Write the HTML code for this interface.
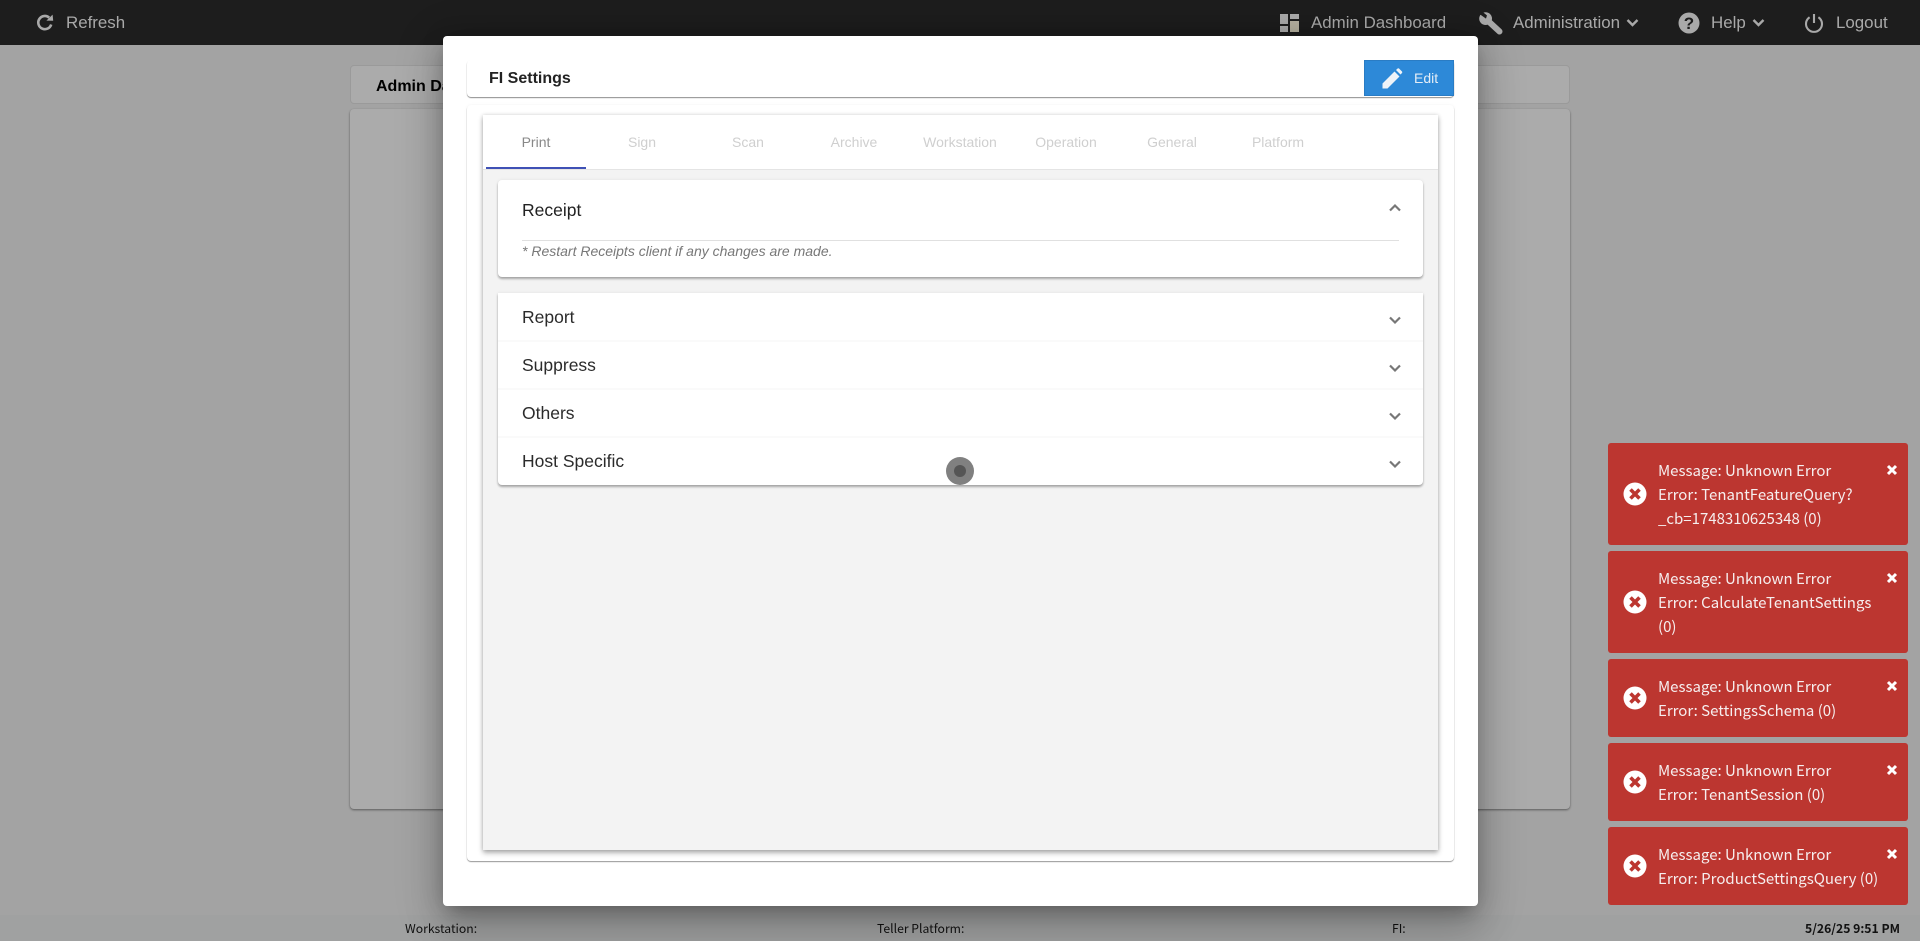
<!DOCTYPE html>
<html><head><meta charset="utf-8"><title>FI Settings</title>
<style>
html,body{margin:0;padding:0;width:1920px;height:941px;overflow:hidden;background:#a3a3a3;font-family:"Liberation Sans",sans-serif}
*{box-sizing:border-box}
.a{position:absolute;white-space:nowrap}
#top{position:absolute;left:0;top:0;width:1920px;height:45px;background:#1d1d1d}
#top .t{position:absolute;top:11px;line-height:24px;font-size:16.9px;color:#a9a9a9;white-space:nowrap}
svg{position:absolute;display:block}
.card{position:absolute;background:#ababab;border-radius:4px}
#foot{position:absolute;left:0;top:915px;width:1920px;height:26px;background:#a0a1a1}
#foot span{position:absolute;top:4px;line-height:18px;font-size:12.2px;color:#111;white-space:nowrap;font-family:"Noto Sans CJK JP","Liberation Sans",sans-serif}
#modal{position:absolute;left:443px;top:36px;width:1035px;height:870px;background:#fff;border-radius:4px;box-shadow:0 11px 15px -7px rgba(0,0,0,.2),0 24px 38px 3px rgba(0,0,0,.14),0 9px 46px 8px rgba(0,0,0,.12),0 0 24px rgba(0,0,0,.12)}
.tab{position:absolute;top:115px;width:100px;height:54px;line-height:55px;text-align:center;font-size:14px;color:#cfcfcf}
.row{position:absolute;left:522px;font-size:17.5px;line-height:24px;color:#2b2b2b}
.toast{position:absolute;left:1608px;width:300px;background:#bc3630;border-radius:3px;color:#f6eeee;font-family:"Noto Sans CJK JP","Liberation Sans",sans-serif;font-size:15px;line-height:24px;padding:16px 0 0 50px;white-space:nowrap}
</style></head><body>

<div class="card" style="left:350px;top:65px;width:1220px;height:39px;border:1px solid #9a9a9a"></div>
<div class="a" style="left:376px;top:77px;font-size:16px;font-weight:bold;line-height:20px;color:#000">Admin Dashboard</div>
<div class="card" style="left:350px;top:109px;width:1220px;height:700px;box-shadow:0 1px 2px rgba(0,0,0,.45)"></div>

<div id="foot">
<span style="left:405px">Workstation:</span>
<span style="left:877px">Teller Platform:</span>
<span style="left:1392px">FI:</span>
<span style="left:1805px;font-weight:bold">5/26/25 9:51 PM</span>
</div>

<div id="top">
<svg style="left:36px;top:14px" width="18" height="18" viewBox="0 0 18 18"><path d="M15.2 10.5A6.6 6.6 0 1 1 13.2 3.6" fill="none" stroke="#a9a9a9" stroke-width="2.6"/><path d="M10.4 6.6L17.2 6.8L16.6 0.6Z" fill="#a9a9a9"/></svg>
<span class="t" style="left:66px">Refresh</span>

<svg style="left:1280px;top:14px" width="19" height="18" viewBox="0 0 19 18" fill="#a9a9a9"><rect x="0" y="0" width="8" height="10"/><rect x="10" y="0" width="9" height="5"/><rect x="0" y="12" width="8" height="6"/><rect x="10" y="7" width="9" height="11" fill="#b5b09f"/></svg>
<span class="t" style="left:1311px">Admin Dashboard</span>

<svg style="left:1479px;top:11px" width="24" height="24" viewBox="0 0 24 24"><circle cx="6.6" cy="7.6" r="6.4" fill="#a9a9a9"/><path d="M7.5 8.5L20.5 20.5" stroke="#a9a9a9" stroke-width="6" stroke-linecap="round"/><path d="M7 7.6L1.4 1.6L4.8 0L8.6 4.6Z" fill="#1d1d1d" transform="rotate(-12 7 7.6)"/></svg>
<span class="t" style="left:1513px">Administration</span>
<svg style="left:1626px;top:18px" width="13" height="10" viewBox="0 0 13 10"><path d="M1.5 2L6.5 7L11.5 2" fill="none" stroke="#a9a9a9" stroke-width="2.4"/></svg>

<svg style="left:1678px;top:12px" width="22" height="22" viewBox="0 0 22 22"><circle cx="11" cy="11" r="10.5" fill="#a9a9a9"/><text x="11" y="17" text-anchor="middle" font-family="Liberation Sans" font-weight="bold" font-size="17" fill="#1d1d1d">?</text></svg>
<span class="t" style="left:1711px">Help</span>
<svg style="left:1752px;top:18px" width="13" height="10" viewBox="0 0 13 10"><path d="M1.5 2L6.5 7L11.5 2" fill="none" stroke="#a9a9a9" stroke-width="2.4"/></svg>

<svg style="left:1804px;top:13px" width="20" height="20" viewBox="0 0 20 20"><path d="M5.6 4.2A8 8 0 1 0 14.4 4.2" fill="none" stroke="#a9a9a9" stroke-width="2.1"/><path d="M10 1V10" stroke="#a9a9a9" stroke-width="2.1"/></svg>
<span class="t" style="left:1836px">Logout</span>
</div>

<div id="modal"></div>
<div class="a" style="left:467px;top:60px;width:987px;height:37px;background:#fff;border-radius:4px;box-shadow:0 1px 1px rgba(0,0,0,.45)"></div>
<div class="a" style="left:489px;top:69px;font-size:16px;font-weight:bold;line-height:20px;color:#222">FI Settings</div>
<div class="a" style="left:1364px;top:60px;width:90px;height:36px;background:#2d89d8;border:1px solid #2a7cc4"></div>
<svg style="left:1382px;top:68px" width="21" height="21" viewBox="0 0 21 21"><path d="M0.5 20.5V15.5L12.5 3.5L17.5 8.5L5.5 20.5Z" fill="#eef3f8"/><path d="M14 2L15.6 0.5Q16.3 0 17 0.5L20 3.5Q20.5 4.2 20 5L18.5 6.5Z" fill="#eef3f8"/></svg>
<div class="a" style="left:1414px;top:68px;font-size:14px;line-height:20px;color:#e4edf6">Edit</div>

<div class="a" style="left:467px;top:105px;width:987px;height:756px;background:#fff;border-radius:4px;box-shadow:0 1px 1px rgba(0,0,0,.4),0 0 3px rgba(0,0,0,.05)"></div>
<div class="a" style="left:483px;top:115px;width:955px;height:735px;background:#f3f3f3;box-shadow:0 3px 5px rgba(0,0,0,.3),0 0 4px rgba(0,0,0,.15)"></div>
<div class="a" style="left:483px;top:115px;width:955px;height:55px;background:#fff;border-bottom:1px solid #e4e4e4"></div>
<div class="a" style="left:486px;top:167px;width:100px;height:2px;background:#3f51b5"></div>

<div class="tab" style="left:486px;color:#888">Print</div>
<div class="tab" style="left:592px">Sign</div>
<div class="tab" style="left:698px">Scan</div>
<div class="tab" style="left:804px">Archive</div>
<div class="tab" style="left:910px">Workstation</div>
<div class="tab" style="left:1016px">Operation</div>
<div class="tab" style="left:1122px">General</div>
<div class="tab" style="left:1228px">Platform</div>

<div class="a" style="left:498px;top:180px;width:925px;height:97px;background:#fff;border-radius:4px;box-shadow:0 2px 2px rgba(0,0,0,.3),0 0 3px rgba(0,0,0,.08)"></div>
<div class="row" style="top:198px;color:#222">Receipt</div>
<div class="a" style="left:522px;top:240px;width:877px;height:1px;background:#e0e0e0"></div>
<div class="a" style="left:522px;top:242px;font-size:14px;font-style:italic;line-height:18px;color:#777">* Restart Receipts client if any changes are made.</div>
<svg style="left:1388px;top:203px" width="14" height="10" viewBox="0 0 14 10"><path d="M2 7.5L7 2.5L12 7.5" fill="none" stroke="#777" stroke-width="2.2"/></svg>

<div class="a" style="left:498px;top:293px;width:925px;height:192px;background:#fff;border-radius:0 0 4px 4px;box-shadow:0 2px 2px rgba(0,0,0,.3),0 0 3px rgba(0,0,0,.08)"></div>
<div class="a" style="left:498px;top:340px;width:925px;height:2px;background:#fafafa"></div>
<div class="a" style="left:498px;top:388px;width:925px;height:2px;background:#fafafa"></div>
<div class="a" style="left:498px;top:436px;width:925px;height:2px;background:#fafafa"></div>
<div class="row" style="top:305px">Report</div>
<div class="row" style="top:353px">Suppress</div>
<div class="row" style="top:401px">Others</div>
<div class="row" style="top:449px">Host Specific</div>
<svg style="left:1388px;top:315px" width="14" height="10" viewBox="0 0 14 10"><path d="M2 2.5L7 7.5L12 2.5" fill="none" stroke="#777" stroke-width="2.2"/></svg>
<svg style="left:1388px;top:363px" width="14" height="10" viewBox="0 0 14 10"><path d="M2 2.5L7 7.5L12 2.5" fill="none" stroke="#777" stroke-width="2.2"/></svg>
<svg style="left:1388px;top:411px" width="14" height="10" viewBox="0 0 14 10"><path d="M2 2.5L7 7.5L12 2.5" fill="none" stroke="#777" stroke-width="2.2"/></svg>
<svg style="left:1388px;top:459px" width="14" height="10" viewBox="0 0 14 10"><path d="M2 2.5L7 7.5L12 2.5" fill="none" stroke="#777" stroke-width="2.2"/></svg>

<svg style="left:946px;top:457px" width="28" height="28" viewBox="0 0 28 28"><circle cx="14" cy="14" r="14" fill="#808080"/><circle cx="14" cy="14" r="6" fill="#555"/></svg>

<div class="toast" style="top:443px;height:102px">Message: Unknown Error<br>Error: TenantFeatureQuery?<br>_cb=1748310625348 (0)</div>
<div class="toast" style="top:551px;height:102px">Message: Unknown Error<br>Error: CalculateTenantSettings<br>(0)</div>
<div class="toast" style="top:659px;height:78px">Message: Unknown Error<br>Error: SettingsSchema (0)</div>
<div class="toast" style="top:743px;height:78px">Message: Unknown Error<br>Error: TenantSession (0)</div>
<div class="toast" style="top:827px;height:78px">Message: Unknown Error<br>Error: ProductSettingsQuery (0)</div>

<svg style="left:1623px;top:482px" width="24" height="24" viewBox="0 0 24 24"><circle cx="12" cy="12" r="11.5" fill="#fff"/><path d="M7.5 7.5L16.5 16.5M16.5 7.5L7.5 16.5" stroke="#bc3630" stroke-width="3.6"/></svg>
<svg style="left:1623px;top:590px" width="24" height="24" viewBox="0 0 24 24"><circle cx="12" cy="12" r="11.5" fill="#fff"/><path d="M7.5 7.5L16.5 16.5M16.5 7.5L7.5 16.5" stroke="#bc3630" stroke-width="3.6"/></svg>
<svg style="left:1623px;top:686px" width="24" height="24" viewBox="0 0 24 24"><circle cx="12" cy="12" r="11.5" fill="#fff"/><path d="M7.5 7.5L16.5 16.5M16.5 7.5L7.5 16.5" stroke="#bc3630" stroke-width="3.6"/></svg>
<svg style="left:1623px;top:770px" width="24" height="24" viewBox="0 0 24 24"><circle cx="12" cy="12" r="11.5" fill="#fff"/><path d="M7.5 7.5L16.5 16.5M16.5 7.5L7.5 16.5" stroke="#bc3630" stroke-width="3.6"/></svg>
<svg style="left:1623px;top:854px" width="24" height="24" viewBox="0 0 24 24"><circle cx="12" cy="12" r="11.5" fill="#fff"/><path d="M7.5 7.5L16.5 16.5M16.5 7.5L7.5 16.5" stroke="#bc3630" stroke-width="3.6"/></svg>

<svg style="left:1886px;top:464px" width="12" height="12" viewBox="0 0 12 12"><path d="M2 2L10 10M10 2L2 10" stroke="#fff" stroke-width="3"/></svg>
<svg style="left:1886px;top:572px" width="12" height="12" viewBox="0 0 12 12"><path d="M2 2L10 10M10 2L2 10" stroke="#fff" stroke-width="3"/></svg>
<svg style="left:1886px;top:680px" width="12" height="12" viewBox="0 0 12 12"><path d="M2 2L10 10M10 2L2 10" stroke="#fff" stroke-width="3"/></svg>
<svg style="left:1886px;top:764px" width="12" height="12" viewBox="0 0 12 12"><path d="M2 2L10 10M10 2L2 10" stroke="#fff" stroke-width="3"/></svg>
<svg style="left:1886px;top:848px" width="12" height="12" viewBox="0 0 12 12"><path d="M2 2L10 10M10 2L2 10" stroke="#fff" stroke-width="3"/></svg>
</body></html>
